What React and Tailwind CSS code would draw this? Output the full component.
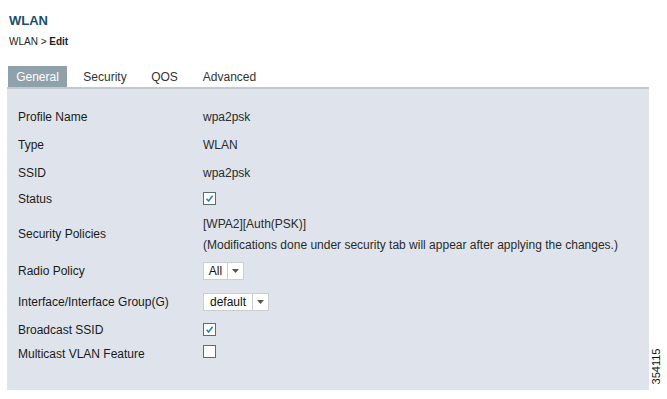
import React from 'react';

const Check = ({ checked }) => (
  <span className="inline-flex h-[13px] w-[13px] items-center justify-center border border-[#5f6a73] bg-white">
    {checked && (
      <svg width="9" height="9" viewBox="0 0 9 9">
        <path d="M1.5 4.8 L3.6 7 L7.6 1.8" fill="none" stroke="#2a8aa6" strokeWidth="1.6" />
      </svg>
    )}
  </span>
);

const Select = ({ value, w }) => (
  <span className={`inline-flex h-[18px] items-stretch border border-[#c9ced4] bg-white ${w}`}>
    <span className="flex flex-1 items-center justify-center text-[12px] text-[#111]">{value}</span>
    <span className="flex w-[16px] items-center justify-center border-l border-[#c9ced4]">
      <svg width="7" height="4" viewBox="0 0 7 4">
        <path d="M0 0 L7 0 L3.5 4 Z" fill="#555" />
      </svg>
    </span>
  </span>
);

const Row = ({ label, h, children }) => (
  <div className={`flex items-center ${h}`}>
    <div className="w-[185px] text-[12px] text-[#1a1a1a]">{label}</div>
    <div className="text-[12px] text-[#2a2a2a]">{children}</div>
  </div>
);

export default function App() {
  return (
    <div
      className="relative h-[399px] w-[667px] overflow-hidden bg-white"
      style={{ fontFamily: '"Liberation Sans", Arial, sans-serif' }}
    >
      <div className="pl-[9px] pt-[13px]">
        <div className="text-[13px] font-bold leading-[15px] text-[#1b4f6b]">WLAN</div>
        <div className="mt-[8px] text-[10px] leading-[12px] text-[#222]">
          WLAN &gt; <span className="font-bold">Edit</span>
        </div>
      </div>

      <div className="ml-[8px] mt-[18px] flex h-[21px] items-stretch text-[12px]">
        <div className="flex w-[59px] items-center justify-center bg-[#8fa1ab] text-white">General</div>
        <div className="flex w-[76px] items-center justify-center text-[#333]">Security</div>
        <div className="flex w-[43px] items-center justify-center text-[#333]">QOS</div>
        <div className="flex w-[87px] items-center justify-center text-[#333]">Advanced</div>
      </div>

      <div className="ml-[7px] w-[642px] h-[303px] border-t-2 border-[#c3c9d0] bg-[#dfe4ec] pl-[11px] pt-[14px]">
        <Row label="Profile Name" h="h-[28px]">wpa2psk</Row>
        <Row label="Type" h="h-[28px]">WLAN</Row>
        <Row label="SSID" h="h-[28px]">wpa2psk</Row>
        <Row label="Status" h="h-[24px]"><Check checked /></Row>
        <div className="flex h-[46px] items-center">
          <div className="w-[185px] text-[12px] text-[#1a1a1a]">Security Policies</div>
          <div className="flex flex-col gap-[7px] text-[12px] leading-[14px] text-[#2a2a2a]">
            <div>[WPA2][Auth(PSK)]</div>
            <div>(Modifications done under security tab will appear after applying the changes.)</div>
          </div>
        </div>
        <Row label="Radio Policy" h="h-[28px]"><Select value="All" w="w-[41px]" /></Row>
        <Row label="Interface/Interface Group(G)" h="h-[34px]"><Select value="default" w="w-[66px]" /></Row>
        <Row label="Broadcast SSID" h="h-[22px]"><Check checked /></Row>
        <Row label="Multicast VLAN Feature" h="h-[26px]"><Check /></Row>
      </div>

      <div className="absolute left-[637px] top-[360px] w-[38px] -rotate-90 text-center text-[11px] leading-[13px] text-[#111]">
        354115
      </div>
    </div>
  );
}
